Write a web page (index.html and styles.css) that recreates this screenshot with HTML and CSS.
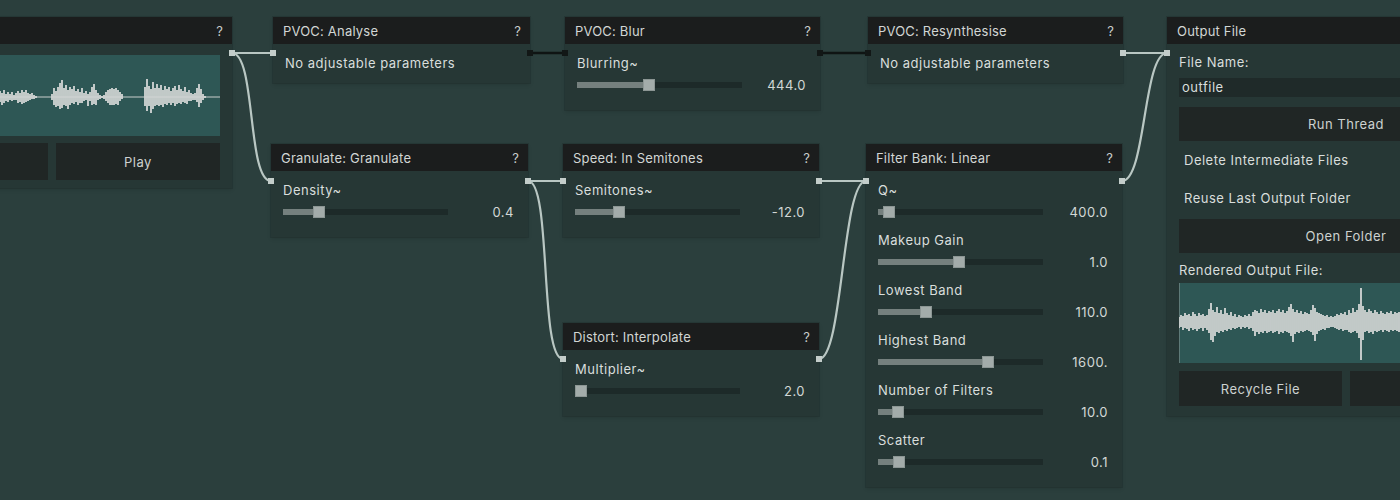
FILE: index.html
```html
<!DOCTYPE html>
<html lang="en">
<head>
<meta charset="UTF-8">
<title>Node Graph</title>
<link rel="stylesheet" href="styles.css">
</head>
<body>
<div class="canvas">

    <!-- input node, mostly off the left edge -->
    <div class="node n-input">
        <div class="node-head"><span></span><span class="help">?</span></div>
        <div class="node-body input-body">
            <div class="wave">
                <svg width="336" height="81" viewBox="0 0 336 81">
                    <g transform="translate(116 0)">
                        <path class="wave-axis" d="M-116 42H220"/>
                        <path class="wave-lines" d="M0 36V47M2 38V50M4 35V48M6 39V46M8 37V47M10 39V45M12 37V46M14 40V45M16 38V45M18 36V48M20 38V47M22 35V49M24 37V48M26 35V47M28 38V46M30 39V45M32 38V44M34 40V44M36 41V43M52 39V45M54 33V50M56 36V52M58 32V51M60 28V54M62 25V53M64 33V50M66 30V51M68 35V54M70 32V50M72 34V48M74 31V49M76 36V47M78 34V50M80 37V48M82 33V48M84 38V46M86 36V45M88 39V51M90 37V46M92 32V50M94 29V49M96 35V50M98 38V45M100 40V44M102 41V43M104 40V44M106 37V46M108 35V48M110 34V50M112 33V50M114 34V50M116 33V49M118 35V50M120 37V46M122 39V44M145 32V51M147 24V56M149 31V51M151 34V58M153 27V54M155 33V51M157 29V50M159 33V51M161 30V50M163 35V52M165 31V49M167 34V50M169 32V48M171 36V50M173 33V48M175 31V51M177 35V49M179 30V48M181 34V49M183 36V47M185 32V48M187 37V49M189 35V46M191 38V46M193 39V45M195 38V45M197 33V47M199 29V52M201 34V48M203 39V45M205 41V43"/>
                    </g>
                </svg>
            </div>
            <div class="btn-row">
                <button class="btn"></button>
                <button class="btn">Play</button>
            </div>
        </div>
    </div>

    <div class="node n-analyse">
        <div class="node-head"><span>PVOC: Analyse</span><span class="help">?</span></div>
        <div class="node-body note-only">No adjustable parameters</div>
    </div>

    <div class="node n-granulate">
        <div class="node-head"><span>Granulate: Granulate</span><span class="help">?</span></div>
        <div class="node-body">
            <div class="param">
                <div class="param-label">Density~</div>
                <div class="slider-row">
                    <div class="track"><div class="fill" style="width: 36px"></div></div>
                    <span class="value">0.4</span>
                </div>
            </div>
        </div>
    </div>

    <div class="node n-blur">
        <div class="node-head"><span>PVOC: Blur</span><span class="help">?</span></div>
        <div class="node-body">
            <div class="param">
                <div class="param-label">Blurring~</div>
                <div class="slider-row">
                    <div class="track"><div class="fill" style="width: 72px"></div></div>
                    <span class="value">444.0</span>
                </div>
            </div>
        </div>
    </div>

    <div class="node n-speed">
        <div class="node-head"><span>Speed: In Semitones</span><span class="help">?</span></div>
        <div class="node-body">
            <div class="param">
                <div class="param-label">Semitones~</div>
                <div class="slider-row">
                    <div class="track"><div class="fill" style="width: 44px"></div></div>
                    <span class="value">-12.0</span>
                </div>
            </div>
        </div>
    </div>

    <div class="node n-distort">
        <div class="node-head"><span>Distort: Interpolate</span><span class="help">?</span></div>
        <div class="node-body">
            <div class="param">
                <div class="param-label">Multiplier~</div>
                <div class="slider-row">
                    <div class="track"><div class="fill" style="width: 6px"></div></div>
                    <span class="value">2.0</span>
                </div>
            </div>
        </div>
    </div>

    <div class="node n-resynth">
        <div class="node-head"><span>PVOC: Resynthesise</span><span class="help">?</span></div>
        <div class="node-body note-only">No adjustable parameters</div>
    </div>

    <div class="node n-filter">
        <div class="node-head"><span>Filter Bank: Linear</span><span class="help">?</span></div>
        <div class="node-body params">
            <div class="param">
                <div class="param-label">Q~</div>
                <div class="slider-row">
                    <div class="track"><div class="fill" style="width: 11px"></div></div>
                    <span class="value">400.0</span>
                </div>
            </div>
            <div class="param">
                <div class="param-label">Makeup Gain</div>
                <div class="slider-row">
                    <div class="track"><div class="fill" style="width: 81px"></div></div>
                    <span class="value">1.0</span>
                </div>
            </div>
            <div class="param">
                <div class="param-label">Lowest Band</div>
                <div class="slider-row">
                    <div class="track"><div class="fill" style="width: 48px"></div></div>
                    <span class="value">110.0</span>
                </div>
            </div>
            <div class="param">
                <div class="param-label">Highest Band</div>
                <div class="slider-row">
                    <div class="track"><div class="fill" style="width: 110px"></div></div>
                    <span class="value">1600.</span>
                </div>
            </div>
            <div class="param">
                <div class="param-label">Number of Filters</div>
                <div class="slider-row">
                    <div class="track"><div class="fill" style="width: 20px"></div></div>
                    <span class="value">10.0</span>
                </div>
            </div>
            <div class="param">
                <div class="param-label">Scatter</div>
                <div class="slider-row">
                    <div class="track"><div class="fill" style="width: 21px"></div></div>
                    <span class="value">0.1</span>
                </div>
            </div>
        </div>
    </div>

    <!-- output node, runs off the right edge -->
    <div class="node n-output">
        <div class="node-head"><span>Output File</span></div>
        <div class="node-body output-body">
            <div class="field-label">File Name:</div>
            <div class="text-input">outfile</div>
            <button class="btn wide run">Run Thread</button>
            <div class="check-row">Delete Intermediate Files</div>
            <div class="check-row">Reuse Last Output Folder</div>
            <button class="btn wide">Open Folder</button>
            <div class="field-label rendered">Rendered Output File:</div>
            <div class="wave out-wave">
                <svg width="334" height="80" viewBox="0 0 334 80">
                    <path class="wave-lines" d="M0 34V45M2 32V44M4 33V47M6 30V45M8 32V46M10 31V48M12 33V45M14 29V47M16 31V46M18 33V48M20 30V46M22 32V45M24 31V48M26 33V45M28 32V47M30 26V50M32 20V57M34 27V59M36 29V53M38 24V49M40 30V50M42 27V48M44 31V49M46 25V47M48 30V48M50 32V46M52 29V47M54 33V45M56 31V46M58 34V45M60 32V44M62 33V46M64 34V44M66 32V45M68 33V44M70 31V46M72 33V45M74 29V48M76 27V53M78 28V49M80 30V51M82 26V49M84 29V50M86 27V48M88 30V50M90 28V49M92 29V48M94 27V50M96 30V49M98 28V48M100 26V51M102 29V49M104 27V50M106 30V48M108 28V49M110 24V50M112 21V53M114 26V59M116 29V51M118 27V49M120 30V50M122 28V48M124 31V49M126 29V48M128 30V47M130 31V48M132 27V49M134 22V52M136 25V58M138 29V51M140 30V48M142 31V47M144 32V46M146 33V47M148 32V45M150 34V45M152 33V44M154 34V44M156 33V45M158 31V46M160 32V47M162 30V46M164 31V48M166 29V47M168 32V47M170 27V49M172 30V50M174 25V49M176 29V48M178 27V50M180 21V55M182 5V77M184 23V57M186 27V49M188 29V48M190 26V50M192 28V49M194 30V51M196 27V48M198 29V49M200 31V48M202 28V47M204 30V49M206 31V47M208 29V48M210 30V49M212 28V47M214 31V48M216 29V47M218 30V48M220 29V49M222 31V48"/>
                </svg>
            </div>
            <div class="btn-row out-btns">
                <button class="btn">Recycle File</button>
                <button class="btn"></button>
            </div>
        </div>
    </div>

    <!-- wires and ports sit over the nodes -->
    <svg class="wires" width="1400" height="500" viewBox="0 0 1400 500">
        <g class="wire">
            <path d="M232 53H273"/>
            <path d="M232 53C256 53 247 181 271 181"/>
            <path d="M528 181H563"/>
            <path d="M528 181C552 181 539 359 563 359"/>
            <path d="M819 181H866"/>
            <path d="M819 359C843 359 842 181 866 181"/>
            <path d="M1123 53H1167"/>
            <path d="M1122 181C1146 181 1143 53 1167 53"/>
        </g>
        <g class="wire dark">
            <path d="M530 53H565"/>
            <path d="M820 53H868"/>
        </g>
        <g class="port">
            <rect x="229" y="50" width="6" height="6"/>
            <rect x="270" y="50" width="6" height="6"/>
            <rect x="268" y="178" width="6" height="6"/>
            <rect x="525" y="178" width="6" height="6"/>
            <rect x="560" y="178" width="6" height="6"/>
            <rect x="560" y="356" width="6" height="6"/>
            <rect x="816" y="178" width="6" height="6"/>
            <rect x="863" y="178" width="6" height="6"/>
            <rect x="816" y="356" width="6" height="6"/>
            <rect x="1120" y="50" width="6" height="6"/>
            <rect x="1164" y="50" width="6" height="6"/>
            <rect x="1119" y="178" width="6" height="6"/>
        </g>
        <g class="port dark">
            <rect x="527" y="50" width="6" height="6"/>
            <rect x="562" y="50" width="6" height="6"/>
            <rect x="817" y="50" width="6" height="6"/>
            <rect x="865" y="50" width="6" height="6"/>
        </g>
    </svg>
</div>
</body>
</html>
```

FILE: styles.css
```css
body {
    margin: 0;
    background: #2b3f3d;
    font-family: Inter, "Noto Sans", sans-serif;
}
.canvas {
    position: relative;
    width: 1400px;
    height: 500px;
    overflow: hidden;
    background: #2b3f3d;
}

/* nodes */
.node {
    position: absolute;
    background: #263735;
    box-shadow: 0 0 0 1px rgba(0,0,0,0.10), 0 2px 4px rgba(0,0,0,0.12);
    color: #d9dedc;
    font-size: 13px;
    letter-spacing: 0.5px;
}
.node-head {
    height: 27px;
    background: #1b1d1d;
    color: #d2d6d4;
    letter-spacing: 0.2px;
    display: flex;
    align-items: center;
    justify-content: space-between;
    padding: 0 9px 0 10px;
}
.help {
    color: #c8cccb;
}
.node-body {
    padding: 9px 14px 13px 12px;
}
.note-only {
    line-height: 20px;
    padding-bottom: 10px;
}

.n-input     { left: -128px; top: 17px;  width: 360px; }
.n-analyse   { left: 273px;  top: 17px;  width: 257px; }
.n-granulate { left: 271px;  top: 144px; width: 257px; }
.n-blur      { left: 565px;  top: 17px;  width: 255px; }
.n-speed     { left: 563px;  top: 144px; width: 256px; }
.n-distort   { left: 563px;  top: 323px; width: 256px; }
.n-resynth   { left: 868px;  top: 17px;  width: 255px; }
.n-filter    { left: 866px;  top: 144px; width: 256px; }
.n-output    { left: 1167px; top: 17px;  width: 358px; }

/* sliders */
.params {
    display: flex;
    flex-direction: column;
    gap: 6px;
}
.param-label {
    line-height: 20px;
}
.slider-row {
    height: 24px;
    display: flex;
    align-items: center;
}
.track {
    width: 165px;
    height: 6px;
    background: #1d2a29;
    position: relative;
}
.fill {
    height: 100%;
    background: #75807e;
    position: relative;
}
.fill::after {
    content: "";
    position: absolute;
    right: -6px;
    top: -3px;
    width: 12px;
    height: 12px;
    background: #a3acaa;
    box-shadow: inset 0 0 0 1px #8c9694;
}
.value {
    flex: 1;
    text-align: right;
    color: #d2d7d5;
}

/* waveforms */
.wave {
    background: #2e5755;
    overflow: hidden;
}
.wave svg {
    display: block;
}
.wave-axis {
    stroke: #c9cfcd;
    stroke-width: 1;
    fill: none;
}
.wave-lines {
    stroke: #d3d6d5;
    stroke-width: 1.8;
    fill: none;
}
.input-body {
    padding: 11px 12px 8px 12px;
}
.input-body .wave {
    height: 81px;
}

/* buttons */
.btn-row {
    display: flex;
    gap: 8px;
    margin-top: 7px;
}
.btn {
    flex: 1;
    height: 37px;
    border: none;
    background: #202625;
    color: #cdd2d0;
    font-family: inherit;
    font-size: 13px;
    letter-spacing: 0.5px;
    padding: 0;
}

/* output node */
.output-body {
    padding: 9px 12px 10px 12px;
    display: flex;
    flex-direction: column;
}
.field-label {
    line-height: 18px;
}
.text-input {
    margin-top: 7px;
    height: 19px;
    line-height: 19px;
    background: #1f2a29;
    padding-left: 3px;
}
.btn.wide {
    flex: none;
    height: 34px;
}
.btn.run {
    margin-top: 10px;
}
.check-row {
    height: 38px;
    line-height: 38px;
    padding-left: 5px;
}
.check-row + .btn.wide {
    margin-top: 2px;
}
.rendered {
    margin-top: 8px;
}
.out-wave {
    margin-top: 4px;
    height: 80px;
    box-shadow: inset 1px 0 0 #5f7a78;
}
.out-btns {
    margin-top: 8px;
}
.out-btns .btn {
    height: 35px;
}

/* wires */
.wires {
    position: absolute;
    left: 0;
    top: 0;
    pointer-events: none;
}
.wire path {
    fill: none;
    stroke: #b9c7c3;
    stroke-width: 2.2;
}
.wire.dark path {
    stroke: #0f1413;
    stroke-width: 2.5;
}
.port rect {
    fill: #c3cdca;
}
.port.dark rect {
    fill: #121716;
}
```
